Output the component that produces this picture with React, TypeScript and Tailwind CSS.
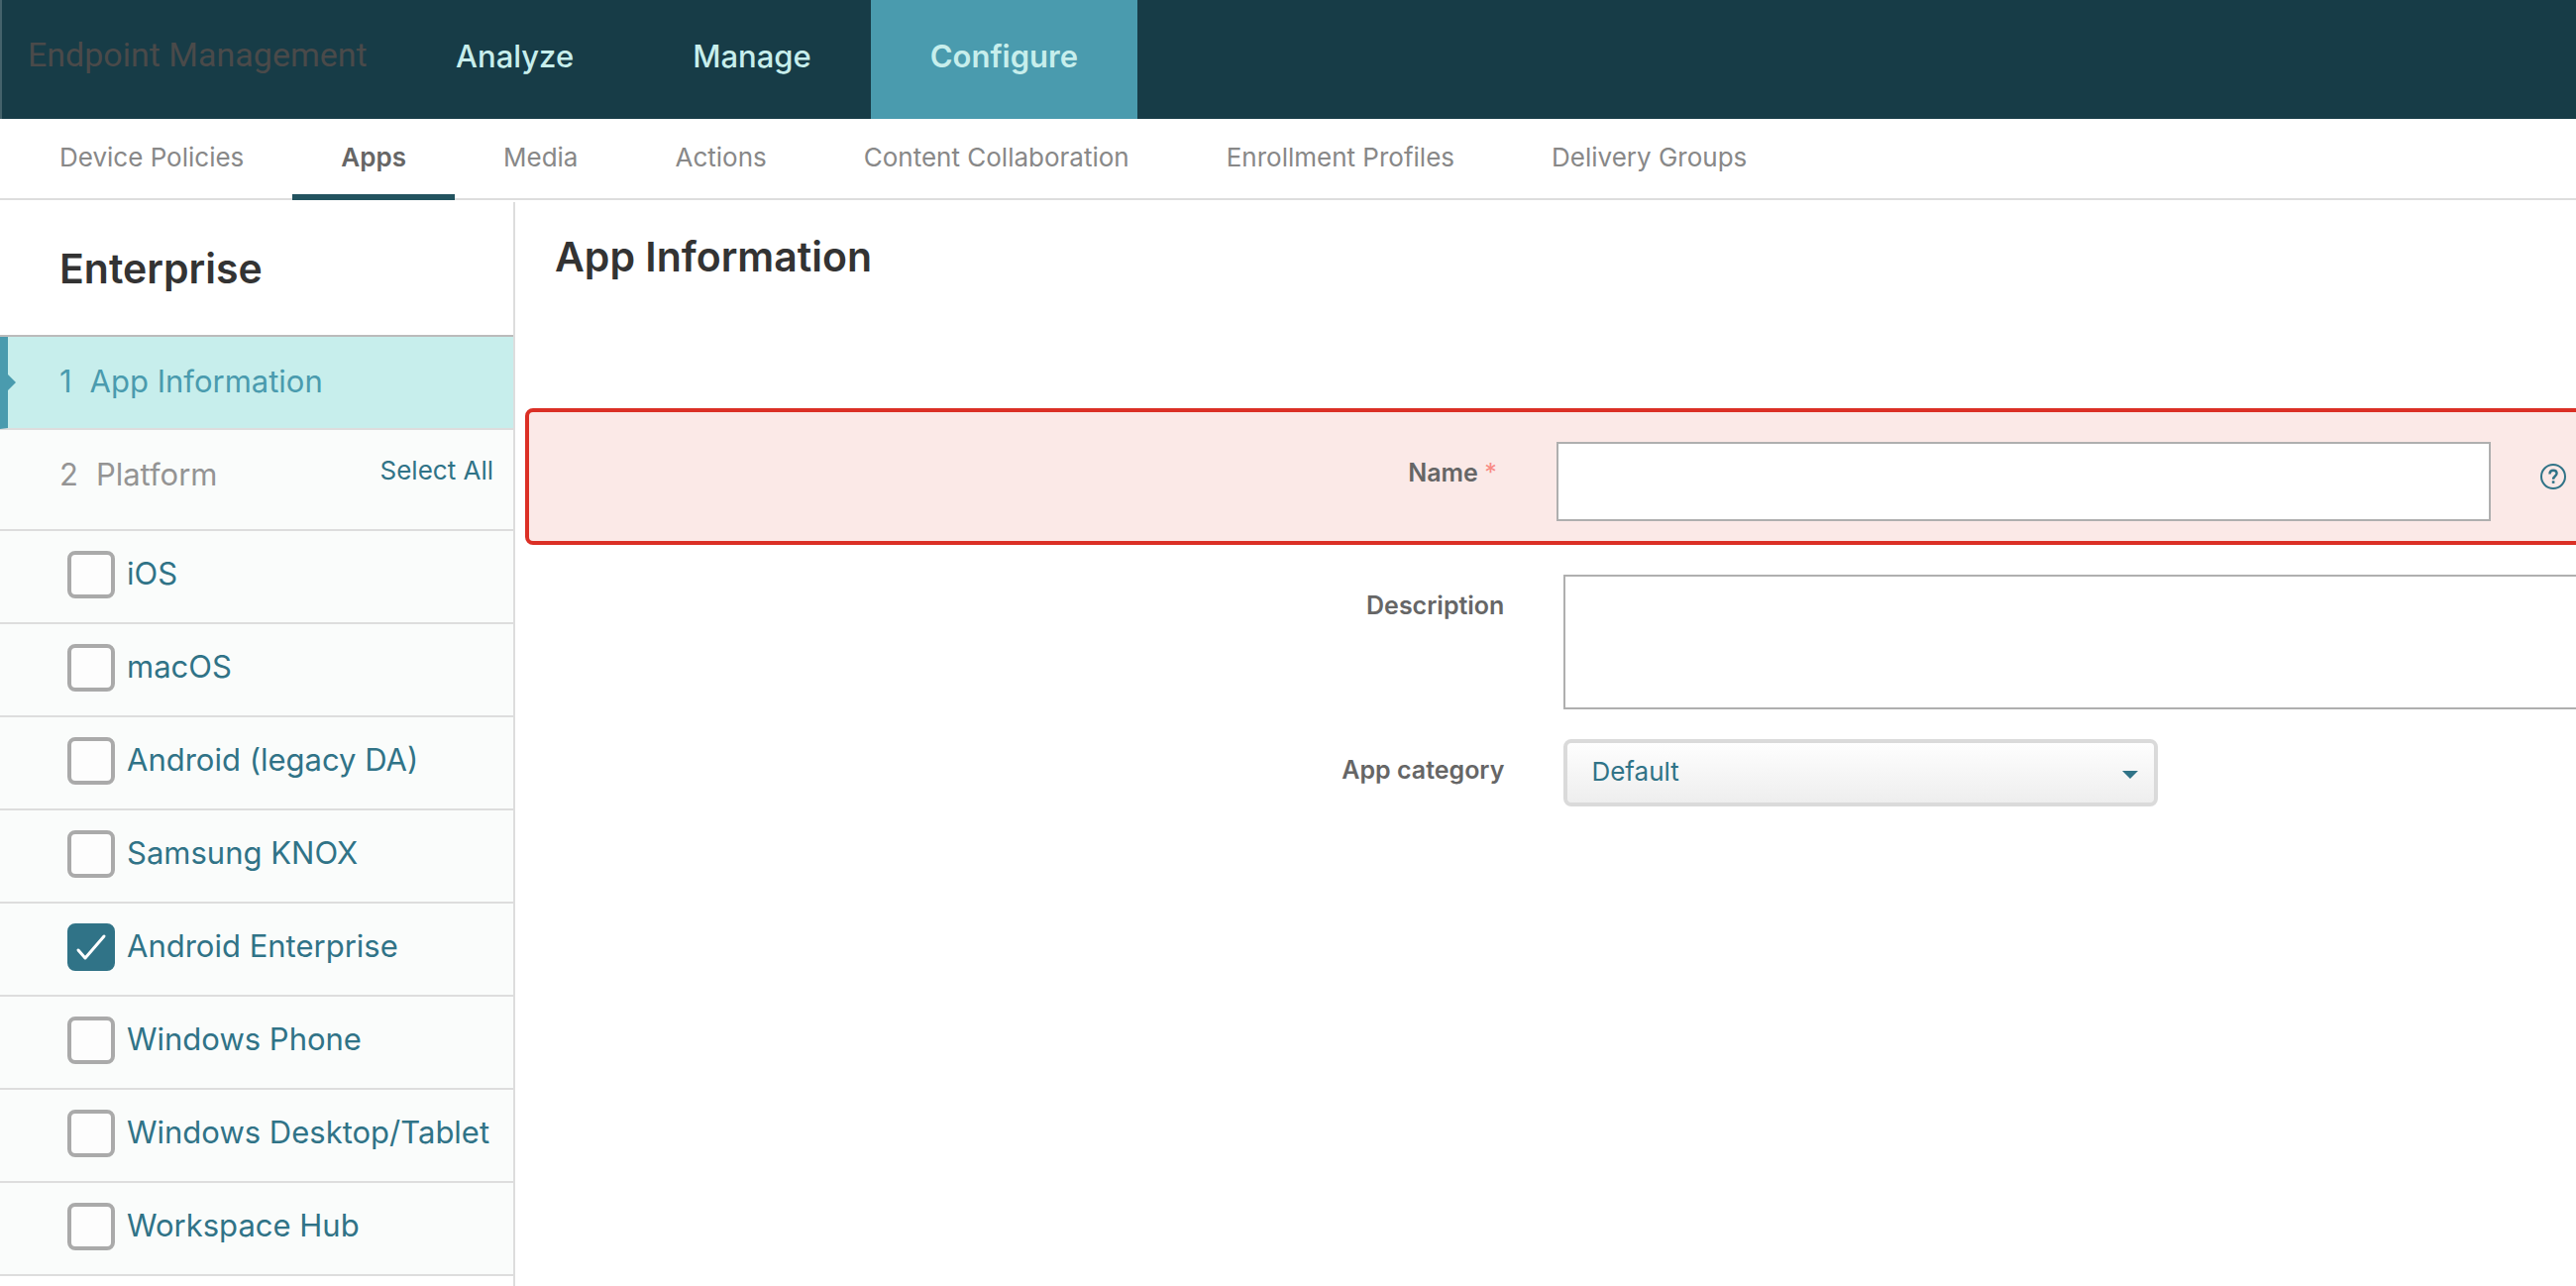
import { useState } from "react";

const mainTabs = ["Analyze", "Manage", "Configure"];

const subTabs = [
  "Device Policies",
  "Apps",
  "Media",
  "Actions",
  "Content Collaboration",
  "Enrollment Profiles",
  "Delivery Groups",
];

const platforms = [
  "iOS",
  "macOS",
  "Android (legacy DA)",
  "Samsung KNOX",
  "Android Enterprise",
  "Windows Phone",
  "Windows Desktop/Tablet",
  "Workspace Hub",
];

const Header = () => (
  <header className="flex h-[120px] border-l-2 border-[#45626b] bg-[#173c47]">
    <div className="flex w-[398px] items-center pb-2.5 pl-[26px] font-['Roboto',sans-serif] text-[34px] whitespace-nowrap text-[#4a4a4a]">
      Endpoint Management
    </div>
    <nav className="flex">
      {mainTabs.map((tab) => (
        <a
          key={tab}
          href="#"
          className={`flex items-center px-[60px] pb-1.5 text-[31px] text-[#c7eeec] ${
            tab === "Configure" ? "bg-[#4a9bae] font-semibold" : "font-medium"
          }`}
        >
          {tab}
        </a>
      ))}
    </nav>
  </header>
);

const SubNav = () => (
  <nav className="box-content flex h-20 border-b-2 border-[#dddddd] pl-[11px]">
    {subTabs.map((tab) => (
      <a
        key={tab}
        href="#"
        className={`flex h-[82px] items-center border-b-[6px] px-[49px] text-[26px] whitespace-nowrap ${
          tab === "Apps"
            ? "border-[#22535f] font-semibold text-[#666666]"
            : "border-transparent text-[#888888]"
        }`}
      >
        {tab}
      </a>
    ))}
  </nav>
);

const Sidebar = () => {
  const [selected, setSelected] = useState<string[]>(["Android Enterprise"]);

  const toggle = (name: string) =>
    setSelected((prev) =>
      prev.includes(name) ? prev.filter((p) => p !== name) : [...prev, name]
    );

  return (
    <aside className="w-[520px] shrink-0 border-r-2 border-[#dddddd]">
      <h2 className="border-b-2 border-[#bbbbbb] pl-[60px] text-[41px] leading-[134px] font-semibold text-[#333333]">
        Enterprise
      </h2>

      <a
        href="#"
        className="relative flex h-[94px] items-center gap-[18px] border-b-2 border-[#dddddd] bg-[#c7eeec] pb-0.5 pl-[60px] text-[31px] text-[#4a9bae]"
      >
        <svg className="absolute top-0 left-0 h-[93px] w-4" viewBox="0 0 16 93" fill="#4a9bae">
          <path d="M0 0h8v38l8 8-8 8v38l-8 1z" />
        </svg>
        <span>1</span>
        <span>App Information</span>
      </a>

      <div className="flex h-[102px] items-center justify-between border-b-2 border-[#dddddd] bg-[#fafcfb] pr-5 pb-2.5 pl-[60px]">
        <div className="flex gap-[18px] text-[31px] text-[#949494]">
          <span>2</span>
          <span>Platform</span>
        </div>
        <button
          type="button"
          className="pb-2.5 text-[26px] text-[#307387]"
          onClick={() => setSelected(platforms)}
        >
          Select All
        </button>
      </div>

      <ul>
        {platforms.map((name) => (
          <li key={name} className="border-b-2 border-[#dddddd] bg-[#fafcfb]">
            <label className="flex h-[92px] items-center pb-1 pl-[68px] text-[31px] whitespace-nowrap text-[#307387]">
              <span className="grid">
                <input
                  type="checkbox"
                  checked={selected.includes(name)}
                  onChange={() => toggle(name)}
                  className="peer col-start-1 row-start-1 size-12 appearance-none rounded-lg border-4 border-[#aaaaaa] bg-[#fdfdfd] checked:border-[#307387] checked:bg-[#307387]"
                />
                <svg
                  className="pointer-events-none invisible col-start-1 row-start-1 size-12 peer-checked:visible"
                  viewBox="0 0 48 48"
                  fill="none"
                  stroke="white"
                  strokeWidth="3"
                  strokeLinecap="round"
                  strokeLinejoin="round"
                >
                  <path d="M11 27l7 8 19-22" />
                </svg>
              </span>
              <span className="pb-0.5 pl-3">{name}</span>
            </label>
          </li>
        ))}
      </ul>
    </aside>
  );
};

const AppForm = () => (
  <main className="min-w-0 flex-1 overflow-hidden">
    <h1 className="pb-[98px] pl-10 text-[41px] leading-[110px] font-semibold text-[#333333]">
      App Information
    </h1>

    <form className="text-[26px] text-[#307387]">
      <div className="-mr-4 ml-[10px] flex h-[138px] items-start rounded-lg border-4 border-[#db2f25] bg-[#fbe9e7] pt-[30px]">
        <label
          htmlFor="name"
          className="w-[47%] text-right text-[25px] leading-[62px] font-semibold text-[#666666]"
        >
          Name <span className="font-normal text-[#f88a84]">*</span>
        </label>
        <input
          id="name"
          type="text"
          className="ml-[60px] h-20 min-w-0 flex-1 border-2 border-[#afafaf] bg-white px-4"
        />
        <button type="button" aria-label="Help" className="mt-[22px] mr-[22px] ml-[50px]">
          <svg
            className="size-[26px]"
            viewBox="0 0 26 26"
            fill="none"
            stroke="#307387"
            strokeWidth="2"
          >
            <circle cx="13" cy="13" r="12" />
            <path d="M9.5 10.5c0-2.5 1.5-3.8 3.6-3.8s3.500 1.200 3.500 3.100c0 2.700-3.500 2.700-3.500 5.900" strokeWidth="2.4" />
            <path d="M13.1 17.300v2.600" strokeWidth="2.6" />
          </svg>
        </button>
      </div>

      <div className="mt-[30px] flex items-start">
        <label
          htmlFor="description"
          className="w-[48%] text-right text-[25px] leading-[62px] font-semibold text-[#666666]"
        >
          Description
        </label>
        <textarea
          id="description"
          className="-mr-4 ml-[60px] block h-[136px] min-w-0 flex-1 resize-none border-2 border-[#afafaf] bg-white p-4"
        />
      </div>

      <div className="mt-[30px] flex items-start">
        <label
          htmlFor="category"
          className="w-[48%] text-right text-[25px] leading-[62px] font-semibold text-[#666666]"
        >
          App category
        </label>
        <div className="ml-[60px] grid w-[600px] items-center">
          <select
            id="category"
            className="col-start-1 row-start-1 h-[68px] appearance-none rounded-lg border-4 border-[#dadada] bg-linear-to-b from-[#fefefe] to-[#eeeeee] pb-1 pl-6"
          >
            <option>Default</option>
          </select>
          <svg
            className="pointer-events-none col-start-1 row-start-1 mt-1 mr-5 h-2 w-4 justify-self-end"
            viewBox="0 0 16 8"
            fill="#307387"
          >
            <path d="M0 0h16l-8 8z" />
          </svg>
        </div>
      </div>
    </form>
  </main>
);

const App = () => {
  return (
    <div className="flex min-h-screen flex-col bg-white font-['Inter',sans-serif]">
      <Header />
      <SubNav />
      <div className="flex flex-1 pt-[2px]">
        <Sidebar />
        <AppForm />
      </div>
    </div>
  );
};

export default App;
